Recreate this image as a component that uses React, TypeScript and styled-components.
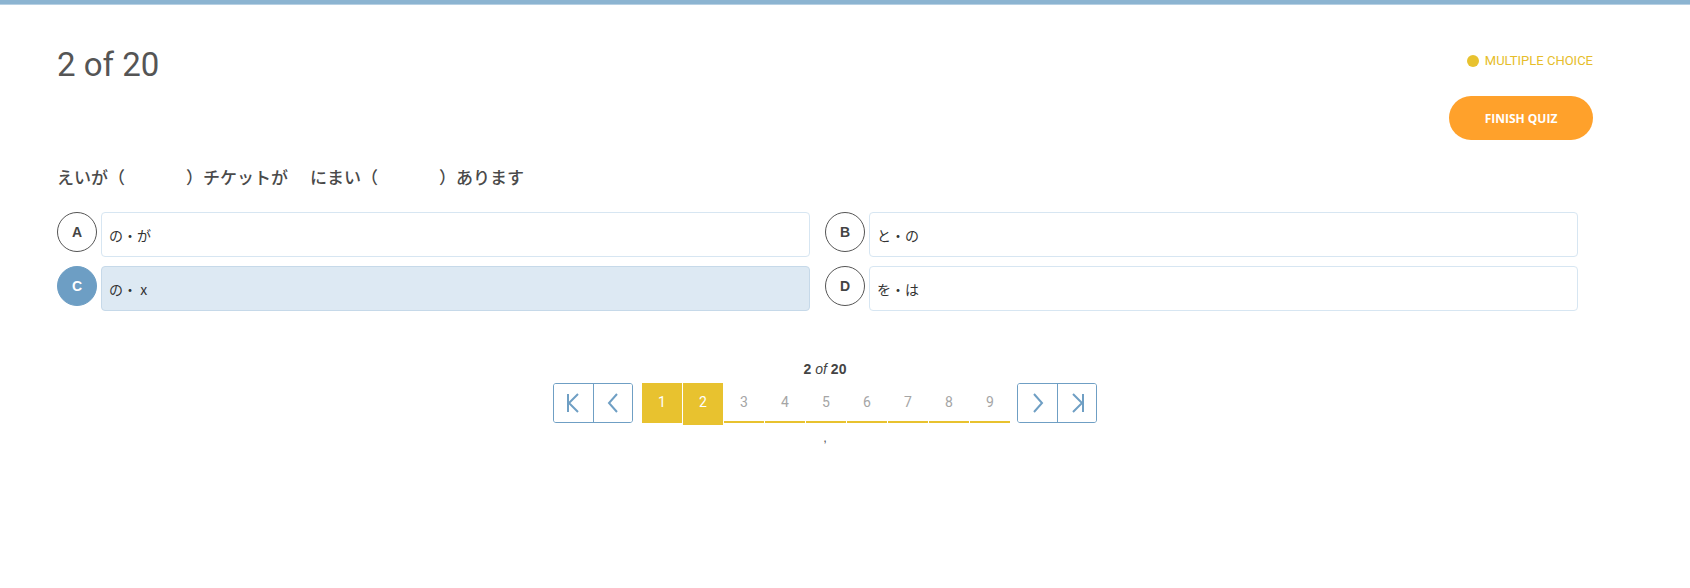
import React from "react";
import styled, { createGlobalStyle, css } from "styled-components";

const GlobalStyle = createGlobalStyle`
  html, body { margin: 0; padding: 0; background: #fff; }
  body { font-family: Roboto, "Noto Sans CJK JP", sans-serif; color: #555; }
  * { box-sizing: border-box; }
`;

const TopBar = styled.div`
  height: 5px;
  background: #8cb4d1;
  border-bottom: 1px solid #b7d0e3;
`;

const Container = styled.main`
  width: 1536px;
  margin-left: 57px;
  padding-top: 41px;
`;

const Header = styled.header`
  display: flex;
  justify-content: space-between;
  align-items: flex-start;
`;

const Title = styled.h1`
  margin: 0;
  font-family: Roboto, sans-serif;
  font-weight: 400;
  font-size: 33px;
  line-height: 37px;
  color: #555;
`;

const HeaderRight = styled.div`
  display: flex;
  flex-direction: column;
  align-items: flex-end;
  padding-top: 7px;
`;

const TypeBadge = styled.div`
  display: flex;
  align-items: center;
  gap: 6px;
  font-family: Roboto, sans-serif;
  font-size: 13px;
  line-height: 16px;
  color: #e6bd2a;
`;

const Dot = styled.span`
  width: 12px;
  height: 12px;
  border-radius: 50%;
  background: #e8c22f;
`;

const FinishButton = styled.button`
  margin-top: 27px;
  width: 144px;
  height: 44px;
  border: none;
  border-radius: 22px;
  background: #ffa12b;
  color: #fff;
  font-family: "Open Sans", sans-serif;
  font-weight: 700;
  font-size: 12px;
  cursor: pointer;
`;

const Question = styled.p`
  margin: 25px 0 0;
  font-family: "Noto Sans CJK JP", sans-serif;
  font-weight: 500;
  font-size: 17px;
  line-height: 24px;
  color: #4a4a4a;
  white-space: pre;
`;

const Blank = styled.span<{ $w: number }>`
  display: inline-block;
  width: ${(p) => p.$w}px;
  white-space: pre;
  overflow: hidden;
  vertical-align: top;
`;

const OptionsGrid = styled.div`
  margin-top: 23px;
  display: grid;
  grid-template-columns: 1fr 1fr;
  row-gap: 9px;
`;

const OptionCell = styled.div`
  display: flex;
  align-items: flex-start;
  gap: 4px;
  padding-right: 15px;
`;

const Letter = styled.div<{ $selected?: boolean }>`
  flex: none;
  width: 40px;
  height: 40px;
  border-radius: 50%;
  border: 1px solid #555;
  display: flex;
  align-items: center;
  justify-content: center;
  font-family: "Liberation Sans", Arial, sans-serif;
  font-weight: 700;
  font-size: 14px;
  color: #444;
  ${(p) =>
    p.$selected &&
    css`
      background: #6d9ec4;
      border-color: #6d9ec4;
      color: #fff;
    `}
`;

const AnswerBox = styled.div<{ $selected?: boolean }>`
  flex: 1;
  height: 45px;
  border: 1px solid #d7e6f2;
  border-radius: 4px;
  padding: 0 7px;
  display: flex;
  align-items: center;
  font-family: "Noto Sans CJK JP", sans-serif;
  font-size: 14px;
  color: #333;
  white-space: pre;
  ${(p) =>
    p.$selected &&
    css`
      background: #dde9f3;
      border-color: #c6d9e9;
    `}
`;

const PagerSection = styled.section`
  margin-top: 50px;
  display: flex;
  flex-direction: column;
  align-items: center;
`;

const PagerLabel = styled.div`
  font-family: "Liberation Sans", Arial, sans-serif;
  font-size: 14px;
  line-height: 17px;
  color: #444;
  b { font-weight: 700; }
  i { font-weight: 400; }
`;

const PagerRow = styled.div`
  margin-top: 5px;
  display: flex;
  align-items: flex-start;
`;

const NavGroup = styled.div`
  display: flex;
  height: 40px;
  border: 1px solid #6f9fc4;
  border-radius: 3px;
  overflow: hidden;
`;

const NavButton = styled.button`
  width: 39px;
  height: 38px;
  padding: 0;
  border: none;
  background: #fff;
  display: flex;
  align-items: center;
  justify-content: center;
  cursor: pointer;
  & + & { border-left: 1px solid #6f9fc4; }
`;

const Pages = styled.div`
  display: flex;
  gap: 1px;
  margin: 0 7px 0 9px;
`;

const PageItem = styled.div<{ $filled?: boolean; $current?: boolean }>`
  position: relative;
  width: 40px;
  height: 40px;
  display: flex;
  align-items: center;
  justify-content: center;
  font-family: Roboto, sans-serif;
  font-size: 14px;
  color: #a5a5a5;
  border-bottom: 2px solid #e8c22f;
  ${(p) =>
    p.$filled &&
    css`
      background: #e8c22f;
      color: #fff;
    `}
  ${(p) =>
    p.$current &&
    css`
      &::after {
        content: "";
        position: absolute;
        left: 0;
        right: 0;
        bottom: -4px;
        height: 2px;
        background: #e8c22f;
      }
    `}
`;

const Comma = styled.div`
  margin-top: 7px;
  font-family: "Liberation Sans", Arial, sans-serif;
  font-size: 13px;
  color: #555;
`;

const Icon = ({ d }: { d: string }) => (
  <svg width="20" height="20" viewBox="0 0 20 20" fill="none" stroke="#6f9fc4" strokeWidth="2" strokeLinecap="butt" strokeLinejoin="miter">
    <path d={d} />
  </svg>
);

const options = [
  { letter: "A", text: "の・が" },
  { letter: "B", text: "と・の" },
  { letter: "C", text: "の・ x", selected: true },
  { letter: "D", text: "を・は" },
];

export default function App() {
  return (
    <>
      <GlobalStyle />
      <TopBar />
      <Container>
        <Header>
          <Title>2 of 20</Title>
          <HeaderRight>
            <TypeBadge>
              <Dot />
              MULTIPLE CHOICE
            </TypeBadge>
            <FinishButton>FINISH QUIZ</FinishButton>
          </HeaderRight>
        </Header>
        <Question>
          えいが（<Blank $w={61}>　　　</Blank>）チケットが<Blank $w={22}>　</Blank>にまい（<Blank $w={61}>　　　</Blank>）あります
        </Question>
        <OptionsGrid>
          {options.map((o) => (
            <OptionCell key={o.letter}>
              <Letter $selected={o.selected}>{o.letter}</Letter>
              <AnswerBox $selected={o.selected}>{o.text}</AnswerBox>
            </OptionCell>
          ))}
        </OptionsGrid>
        <PagerSection>
          <PagerLabel>
            <b>2</b> <i>of</i> <b>20</b>
          </PagerLabel>
          <PagerRow>
            <NavGroup>
              <NavButton aria-label="First">
                <Icon d="M4 1 V19 M14 1 L5 10 L14 19" />
              </NavButton>
              <NavButton aria-label="Previous">
                <Icon d="M14 1 L6 10 L14 19" />
              </NavButton>
            </NavGroup>
            <Pages>
              {[1, 2, 3, 4, 5, 6, 7, 8, 9].map((n) => (
                <PageItem key={n} $filled={n <= 2} $current={n === 2}>
                  {n}
                </PageItem>
              ))}
            </Pages>
            <NavGroup>
              <NavButton aria-label="Next">
                <Icon d="M6 1 L14 10 L6 19" />
              </NavButton>
              <NavButton aria-label="Last">
                <Icon d="M6 1 L15 10 L6 19 M16 1 V19" />
              </NavButton>
            </NavGroup>
          </PagerRow>
          <Comma>,</Comma>
        </PagerSection>
      </Container>
    </>
  );
}
